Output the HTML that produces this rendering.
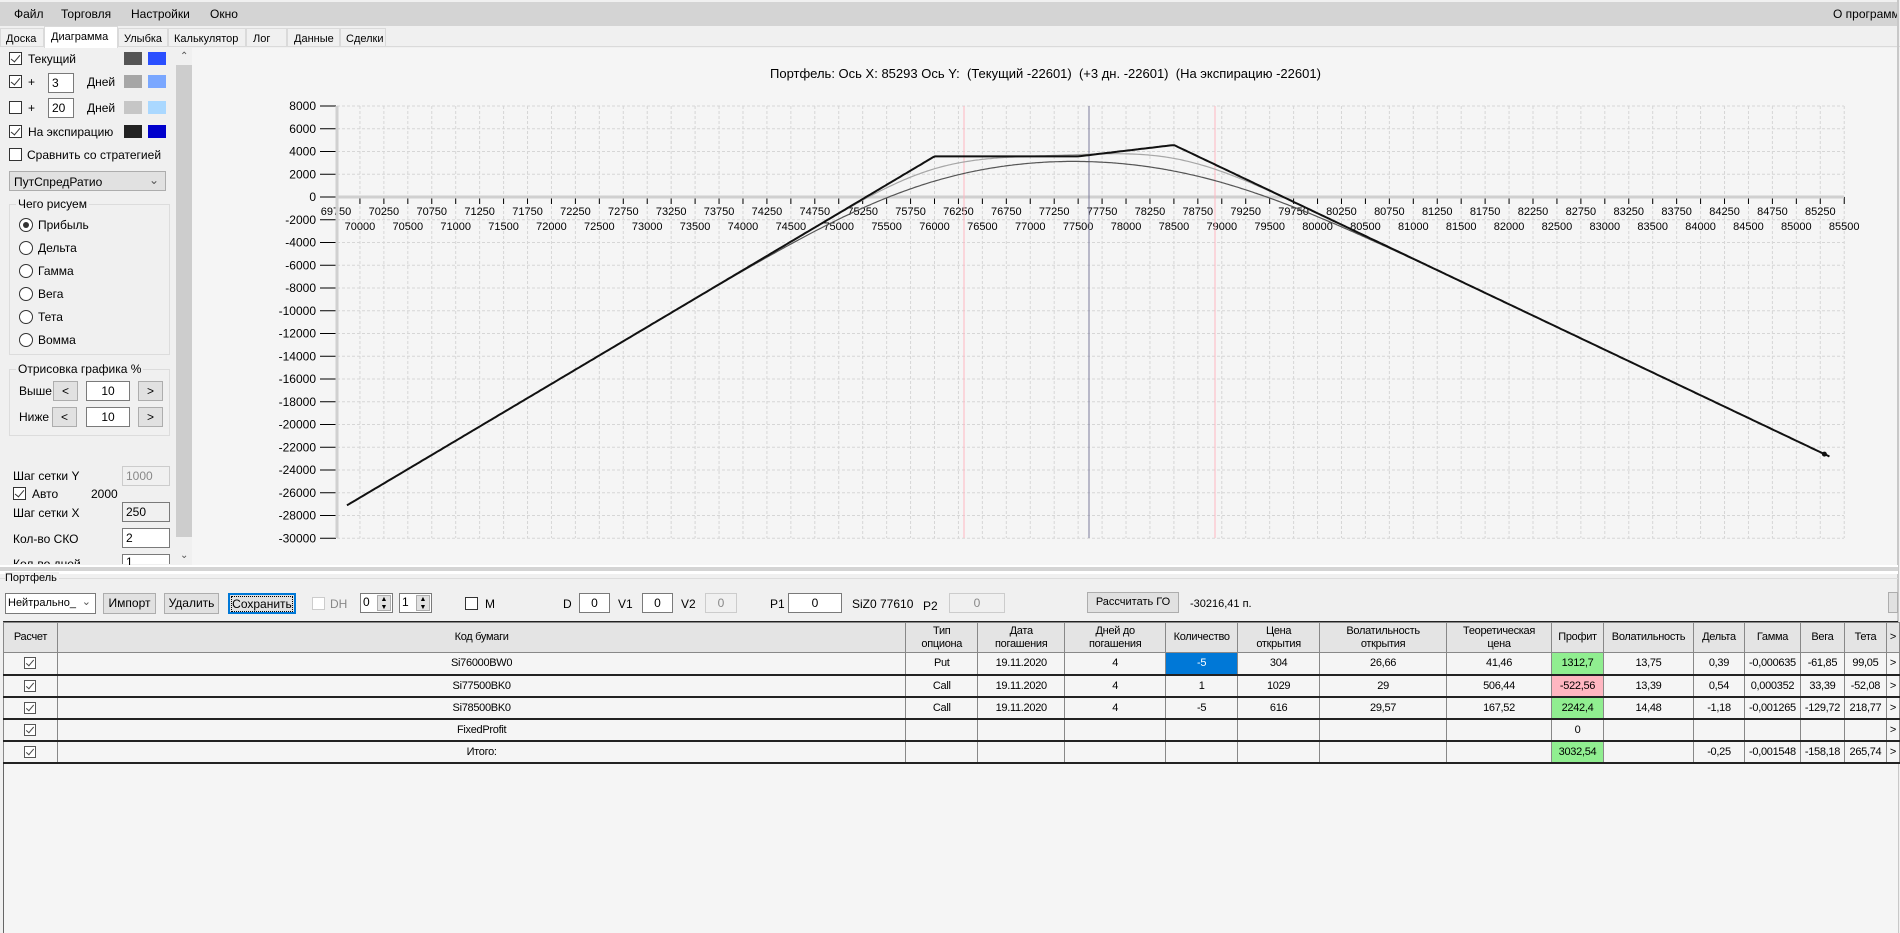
<!DOCTYPE html>
<html><head><meta charset="utf-8">
<style>
*{box-sizing:border-box;margin:0;padding:0}
body{width:1900px;height:933px;overflow:hidden;background:#f0f0f0;font-family:"Liberation Sans",sans-serif;font-size:12px;color:#000;position:relative}
.a{position:absolute;white-space:nowrap}
.cb{position:absolute;width:13px;height:13px;border:1px solid #333;background:#fff}
.cb.k::after{content:"";position:absolute;left:3px;top:0px;width:4px;height:8px;border:solid #333;border-width:0 1px 1px 0;transform:rotate(40deg)}
.rb{position:absolute;width:14px;height:14px;border:1px solid #333;border-radius:50%;background:#fff}
.rb.k::after{content:"";position:absolute;left:3px;top:3px;width:6px;height:6px;border-radius:50%;background:#333}
.in{position:absolute;border:1px solid #7a7a7a;background:#fff;height:20px;padding:2px 3px;font-size:12px}
.btn{position:absolute;border:1px solid #adadad;background:#e1e1e1;text-align:center;font-size:12px;line-height:18px}
.sw{position:absolute;width:18px;height:13px}
.grp{position:absolute;border:1px solid #dcdcdc}
.grp span{position:absolute;top:-8px;left:6px;background:#f0f0f0;padding:0 2px}
.tab{position:absolute;top:28px;height:19px;border:1px solid #dadada;padding:4px 0 0 5px;font-size:11px;background:#f0f0f0}
table{position:absolute;left:3px;top:622px;border-collapse:collapse;font-size:11px;table-layout:fixed;letter-spacing:-0.3px}
td,th{border:1px solid #888;text-align:center;height:22px;padding:0;overflow:hidden;white-space:nowrap;background:#f5f5f5;font-weight:normal}
th{background:#e4e4e4;height:30px;line-height:13px}
tr.r td{border-bottom:2px solid #222}
.ck{display:inline-block;width:12px;height:12px;border:1px solid #555;background:#fff;position:relative;vertical-align:middle}
.ck::after{content:"";position:absolute;left:3px;top:0;width:3px;height:7px;border:solid #444;border-width:0 1px 1px 0;transform:rotate(40deg)}
</style></head><body>
<!-- menu -->
<div class="a" style="left:0;top:2px;width:1898px;height:24px;background:#d4d4d4"></div>
<div class="a" style="left:14px;top:7px">Файл</div>
<div class="a" style="left:61px;top:7px">Торговля</div>
<div class="a" style="left:131px;top:7px">Настройки</div>
<div class="a" style="left:210px;top:7px">Окно</div>
<div class="a" style="left:1833px;top:7px">О программ</div>
<!-- tabs -->
<div class="a" style="left:0;top:46px;width:1900px;height:1px;background:#dadada"></div>
<div class="tab" style="left:0;width:44px">Доска</div>
<div class="tab" style="left:44px;top:26px;width:74px;height:22px;background:#fff;border-bottom:none;padding-left:6px">Диаграмма</div>
<div class="tab" style="left:118px;width:50px">Улыбка</div>
<div class="tab" style="left:168px;width:78px">Калькулятор</div>
<div class="tab" style="left:246px;width:41px;padding-left:6px">Лог</div>
<div class="tab" style="left:287px;width:53px;padding-left:6px">Данные</div>
<div class="tab" style="left:340px;width:46px">Сделки</div>
<!-- chart bg -->
<div class="a" style="left:192px;top:48px;width:1706px;height:518px;background:#f5f5f5"></div>
<div class="a" style="left:1897px;top:0;width:2px;height:933px;background:#c8c8c8"></div>
<svg class="a" style="left:0;top:0" width="1900" height="570" id="ch" font-family="Liberation Sans, sans-serif"></svg>
<div class="a" style="left:770px;top:66px;font-size:13px">Портфель: Ось X: 85293 Ось Y:&nbsp; (Текущий -22601)&nbsp; (+3 дн. -22601)&nbsp; (На экспирацию -22601)</div>
<!-- left panel -->
<div class="cb k" style="left:9px;top:52px"></div><div class="a" style="left:28px;top:52px">Текущий</div>
<div class="sw" style="left:124px;top:52px;background:#555"></div><div class="sw" style="left:148px;top:52px;background:#2a4fff"></div>
<div class="cb k" style="left:9px;top:75px"></div><div class="a" style="left:28px;top:75px">+</div>
<div class="in" style="left:48px;top:73px;width:26px">3</div><div class="a" style="left:87px;top:75px">Дней</div>
<div class="sw" style="left:124px;top:75px;background:#a6a6a6"></div><div class="sw" style="left:148px;top:75px;background:#7aa7ff"></div>
<div class="cb" style="left:9px;top:101px"></div><div class="a" style="left:28px;top:101px">+</div>
<div class="in" style="left:48px;top:98px;width:26px">20</div><div class="a" style="left:87px;top:101px">Дней</div>
<div class="sw" style="left:124px;top:101px;background:#c6c6c6"></div><div class="sw" style="left:148px;top:101px;background:#aad8ff"></div>
<div class="cb k" style="left:9px;top:125px"></div><div class="a" style="left:28px;top:125px">На экспирацию</div>
<div class="sw" style="left:124px;top:125px;background:#222"></div><div class="sw" style="left:148px;top:125px;background:#0000cc"></div>
<div class="cb" style="left:9px;top:148px"></div><div class="a" style="left:27px;top:148px">Сравнить со стратегией</div>
<div class="a" style="left:9px;top:171px;width:157px;height:20px;border:1px solid #adadad;background:#e1e1e1;padding:3px 0 0 4px">ПутСпредРатио<span style="position:absolute;right:6px;top:1px;color:#555">&#8964;</span></div>
<div class="grp" style="left:9px;top:204px;width:161px;height:151px"><span>Чего рисуем</span></div>
<div class="rb k" style="left:19px;top:218px"></div><div class="a" style="left:38px;top:218px">Прибыль</div>
<div class="rb" style="left:19px;top:241px"></div><div class="a" style="left:38px;top:241px">Дельта</div>
<div class="rb" style="left:19px;top:264px"></div><div class="a" style="left:38px;top:264px">Гамма</div>
<div class="rb" style="left:19px;top:287px"></div><div class="a" style="left:38px;top:287px">Вега</div>
<div class="rb" style="left:19px;top:310px"></div><div class="a" style="left:38px;top:310px">Тета</div>
<div class="rb" style="left:19px;top:333px"></div><div class="a" style="left:38px;top:333px">Вомма</div>
<div class="grp" style="left:9px;top:369px;width:161px;height:67px"><span>Отрисовка графика %</span></div>
<div class="a" style="left:19px;top:384px">Выше</div>
<div class="btn" style="left:53px;top:381px;width:25px;height:20px">&lt;</div>
<div class="in" style="left:86px;top:381px;width:44px;text-align:center">10</div>
<div class="btn" style="left:138px;top:381px;width:25px;height:20px">&gt;</div>
<div class="a" style="left:19px;top:410px">Ниже</div>
<div class="btn" style="left:52px;top:407px;width:25px;height:20px">&lt;</div>
<div class="in" style="left:86px;top:407px;width:44px;text-align:center">10</div>
<div class="btn" style="left:138px;top:407px;width:25px;height:20px">&gt;</div>
<div class="a" style="left:13px;top:469px">Шаг сетки Y</div>
<div class="in" style="left:122px;top:466px;width:48px;border-color:#ccc;background:#f0f0f0;color:#888">1000</div>
<div class="cb k" style="left:13px;top:487px"></div><div class="a" style="left:32px;top:487px">Авто</div><div class="a" style="left:91px;top:487px">2000</div>
<div class="a" style="left:13px;top:506px">Шаг сетки X</div>
<div class="in" style="left:122px;top:502px;width:48px;background:#f0f0f0">250</div>
<div class="a" style="left:13px;top:532px">Кол-во СКО</div>
<div class="in" style="left:122px;top:528px;width:48px">2</div>
<div class="a" style="left:13px;top:557px;height:7px;overflow:hidden">Кол-во дней</div>
<div class="in" style="left:122px;top:554px;width:48px;height:10px;border-bottom:none;padding-top:0">1</div>
<!-- scrollbar -->
<div class="a" style="left:176px;top:48px;width:16px;height:517px;background:#f0f0f0"></div>
<div class="a" style="left:176px;top:65px;width:16px;height:472px;background:#cdcdcd"></div>
<div class="a" style="left:180px;top:51px;font-size:10px;color:#555">&#8963;</div>
<div class="a" style="left:180px;top:550px;font-size:10px;color:#555">&#8964;</div>
<!-- splitter -->
<div class="a" style="left:0;top:565px;width:1898px;height:5px;background:#fff"></div>
<div class="a" style="left:0;top:567px;width:1898px;height:4px;background:#d4d4d4"></div>
<div class="a" style="left:0;top:571px;width:1898px;height:3px;background:#fff"></div>
<div class="a" style="left:0;top:578px;width:1898px;height:1px;background:#dcdcdc"></div>
<div class="a" style="left:5px;top:572px;background:#f0f0f0;font-size:11px;padding-right:2px">Портфель</div>
<!-- toolbar -->
<div class="a" style="left:5px;top:593px;width:91px;height:21px;border:1px solid #7a7a7a;background:#fff;padding:3px 0 0 2px;font-size:11px">Нейтрально_<span style="position:absolute;right:4px;top:1px;color:#555">&#8964;</span></div>
<div class="btn" style="left:103px;top:593px;width:53px;height:21px">Импорт</div>
<div class="btn" style="left:164px;top:593px;width:55px;height:21px">Удалить</div>
<div class="btn" style="left:228px;top:593px;width:68px;height:21px;border:2px solid #0078d7"><span style="outline:1px dotted #000">Сохранить</span></div>
<div class="cb" style="left:312px;top:597px;border-color:#ccc"></div><div class="a" style="left:330px;top:597px;color:#888">DH</div>
<div class="in" style="left:360px;top:593px;width:33px;height:20px;padding:1px 2px">0</div><div class="btn" style="left:377px;top:595px;width:14px;height:16px;font-size:7px;line-height:8px">▲<br>▼</div>
<div class="in" style="left:399px;top:593px;width:33px;height:20px;padding:1px 2px">1</div><div class="btn" style="left:416px;top:595px;width:14px;height:16px;font-size:7px;line-height:8px">▲<br>▼</div>
<div class="cb" style="left:465px;top:597px"></div><div class="a" style="left:485px;top:597px">M</div>
<div class="a" style="left:563px;top:597px">D</div><div class="in" style="left:579px;top:593px;width:31px;text-align:center">0</div>
<div class="a" style="left:618px;top:597px">V1</div><div class="in" style="left:642px;top:593px;width:31px;text-align:center">0</div>
<div class="a" style="left:681px;top:597px">V2</div><div class="in" style="left:705px;top:593px;width:32px;text-align:center;border-color:#ccc;color:#888;background:#f0f0f0">0</div>
<div class="a" style="left:770px;top:597px">P1</div><div class="in" style="left:788px;top:593px;width:54px;text-align:center">0</div>
<div class="a" style="left:852px;top:597px">SiZ0 77610</div>
<div class="a" style="left:923px;top:599px">P2</div><div class="in" style="left:949px;top:593px;width:56px;text-align:center;border-color:#ccc;color:#888;background:#f0f0f0">0</div>
<div class="btn" style="left:1087px;top:592px;width:92px;height:21px;font-size:11px">Рассчитать ГО</div>
<div class="a" style="left:1190px;top:598px;font-size:11px">-30216,41 п.</div>
<div class="btn" style="left:1888px;top:592px;width:10px;height:21px"></div>
<!-- table -->
<div class="a" style="left:3px;top:621px;width:1895px;height:312px;background:#f5f5f5;border-left:1px solid #666;border-top:2px solid #222"></div>
<table>
<colgroup><col style="width:54px"><col style="width:849px"><col style="width:72px"><col style="width:87px"><col style="width:101px"><col style="width:72px"><col style="width:82px"><col style="width:127px"><col style="width:105px"><col style="width:52px"><col style="width:90px"><col style="width:51px"><col style="width:56px"><col style="width:44px"><col style="width:42px"><col style="width:13px"></colgroup>
<tr><th>Расчет</th><th>Код бумаги</th><th>Тип<br>опциона</th><th>Дата<br>погашения</th><th>Дней до<br>погашения</th><th>Количество</th><th>Цена<br>открытия</th><th>Волатильность<br>открытия</th><th>Теоретическая<br>цена</th><th>Профит</th><th>Волатильность</th><th>Дельта</th><th>Гамма</th><th>Вега</th><th>Тета</th><th>&gt;</th></tr>
<tr class="r"><td><span class="ck"></span></td><td>Si76000BW0</td><td>Put</td><td>19.11.2020</td><td>4</td><td style="background:#0078d7;color:#fff">-5</td><td>304</td><td>26,66</td><td>41,46</td><td style="background:#90ee90">1312,7</td><td>13,75</td><td>0,39</td><td>-0,000635</td><td>-61,85</td><td>99,05</td><td>&gt;</td></tr>
<tr class="r"><td><span class="ck"></span></td><td>Si77500BK0</td><td>Call</td><td>19.11.2020</td><td>4</td><td>1</td><td>1029</td><td>29</td><td>506,44</td><td style="background:#ffb6c1">-522,56</td><td>13,39</td><td>0,54</td><td>0,000352</td><td>33,39</td><td>-52,08</td><td>&gt;</td></tr>
<tr class="r"><td><span class="ck"></span></td><td>Si78500BK0</td><td>Call</td><td>19.11.2020</td><td>4</td><td>-5</td><td>616</td><td>29,57</td><td>167,52</td><td style="background:#90ee90">2242,4</td><td>14,48</td><td>-1,18</td><td>-0,001265</td><td>-129,72</td><td>218,77</td><td>&gt;</td></tr>
<tr class="r"><td><span class="ck"></span></td><td>FixedProfit</td><td></td><td></td><td></td><td></td><td></td><td></td><td></td><td>0</td><td></td><td></td><td></td><td></td><td></td><td>&gt;</td></tr>
<tr class="r"><td><span class="ck"></span></td><td>Итого:</td><td></td><td></td><td></td><td></td><td></td><td></td><td></td><td style="background:#90ee90">3032,54</td><td></td><td>-0,25</td><td>-0,001548</td><td>-158,18</td><td>265,74</td><td>&gt;</td></tr>
</table>
<script>
(function(){
var s=document.getElementById('ch'),h='';
var X=function(p){return 336+(p-69750)/250*23.94;},Y=function(v){return 197-v/2000*22.75;};
for(var k=0;k<=19;k++){var y=106+22.75*k;h+='<line x1="337" x2="1844" y1="'+y+'" y2="'+y+'" stroke="#d6d6d6" stroke-dasharray="3,2"/>';
h+='<line x1="320" x2="336" y1="'+y+'" y2="'+y+'" stroke="#000"/>';
h+='<text x="316" y="'+(y+4)+'" font-size="12" text-anchor="end">'+(8000-2000*k)+'</text>';}
for(var i=0;i<=63;i++){var x=336+23.94*i;h+='<line x1="'+x+'" x2="'+x+'" y1="106" y2="538" stroke="#d6d6d6" stroke-dasharray="3,2"/>';
h+='<line x1="'+x+'" x2="'+x+'" y1="197" y2="204" stroke="#000"/>';
h+='<text x="'+x+'" y="'+(i%2?230:215)+'" font-size="11" text-anchor="middle">'+(69750+250*i)+'</text>';}
h+='<line x1="337" x2="337" y1="106" y2="538" stroke="#d0d0d0" stroke-width="3"/>';
h+='<line x1="336" x2="1844" y1="197" y2="197" stroke="#d0d0d0" stroke-width="3"/>';
h+='<line x1="964" x2="964" y1="106" y2="538" stroke="#ffb6c1"/>';
h+='<line x1="1215" x2="1215" y1="106" y2="538" stroke="#ffb6c1"/>';
h+='<line x1="1089" x2="1089" y1="106" y2="538" stroke="#7a7a9a"/>';
function N(x){var t=1/(1+0.2316419*Math.abs(x)),d=0.3989423*Math.exp(-x*x/2),p=d*t*(0.3193815+t*(-0.3565638+t*(1.781478+t*(-1.821256+t*1.330274))));return x>0?1-p:p;}
function bs(S,K,v,T,c){if(T<=0)return c?Math.max(0,S-K):Math.max(0,K-S);var sd=v*Math.sqrt(T),d1=(Math.log(S/K)+sd*sd/2)/sd,d2=d1-sd;var C=S*N(d1)-K*N(d2);return c?C:C-S+K;}
function pf(S,T){return -5*(bs(S,76000,.1375,T,0)-304)+(bs(S,77500,.1339,T,1)-1029)-5*(bs(S,78500,.1448,T,1)-616);}
function path(T){var d='';for(var p=69865;p<=85350;p+=20){d+=(d?'L':'M')+X(p).toFixed(1)+','+Y(pf(p,T)).toFixed(1);}return d;}
h+='<path d="'+path(1/365)+'" fill="none" stroke="#a6a6a6" stroke-width="1.2"/>';
h+='<path d="'+path(4/365)+'" fill="none" stroke="#555" stroke-width="1.2"/>';
h+='<path d="'+path(0)+'" fill="none" stroke="#111" stroke-width="2"/>';
h+='<circle cx="'+X(85293)+'" cy="'+Y(-22601)+'" r="2.5" fill="#111"/>';
s.innerHTML=h;})();
</script>
</body></html>
